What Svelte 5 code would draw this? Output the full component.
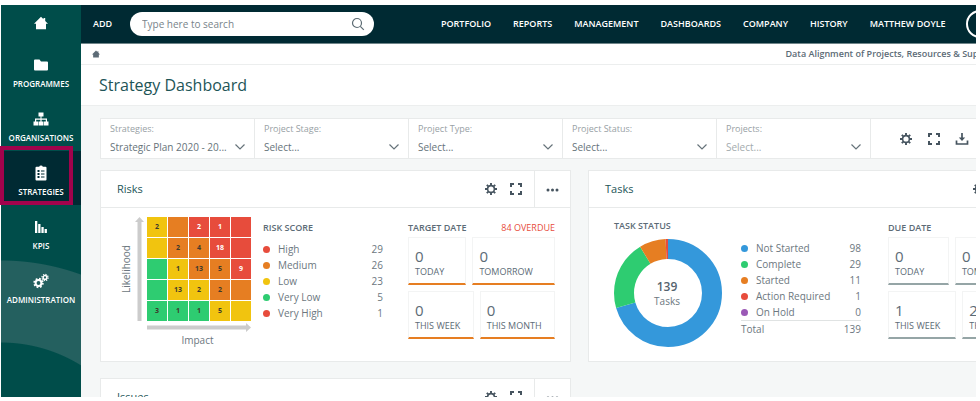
<script>
  let search = "";

  const navLinks = [
    "PORTFOLIO",
    "REPORTS",
    "MANAGEMENT",
    "DASHBOARDS",
    "COMPANY",
    "HISTORY",
    "MATTHEW DOYLE",
  ];

  const sideLinks = [
    { name: "PROGRAMMES", icon: "folder" },
    { name: "ORGANISATIONS", icon: "tree" },
    { name: "STRATEGIES", icon: "clipboard", active: true },
    { name: "KPIS", icon: "bars" },
    { name: "ADMINISTRATION", icon: "cogs" },
  ];

  const filters = [
    { id: "strategies", label: "Strategies:", value: "Strategic Plan 2020 - 20..." },
    { id: "stage", label: "Project Stage:", value: "Select..." },
    { id: "type", label: "Project Type:", value: "Select..." },
    { id: "status", label: "Project Status:", value: "Select..." },
    { id: "projects", label: "Projects:", value: "Select...", empty: true },
  ];

  // y = yellow, o = orange, r = red, g = green
  const matrix = [
    [["y", 2], ["o", ""], ["r", 2], ["r", 1], ["r", ""]],
    [["y", ""], ["o", 2], ["o", 4], ["r", 18], ["r", ""]],
    [["g", ""], ["y", 1], ["o", 13], ["o", 5], ["r", 9]],
    [["g", ""], ["y", 13], ["y", 2], ["o", 2], ["o", ""]],
    [["g", 3], ["g", 1], ["g", 1], ["y", 5], ["y", ""]],
  ];

  const risks = [
    { name: "High", count: 29, color: "#e74c3c" },
    { name: "Medium", count: 26, color: "#e67e22" },
    { name: "Low", count: 23, color: "#f1c40f" },
    { name: "Very Low", count: 5, color: "#2ecc71" },
    { name: "Very High", count: 1, color: "#e74c3c" },
  ];

  const tasks = [
    { name: "Not Started", count: 98, color: "#3498db" },
    { name: "Complete", count: 29, color: "#2ecc71" },
    { name: "Started", count: 11, color: "#e67e22" },
    { name: "Action Required", count: 1, color: "#e74c3c" },
    { name: "On Hold", count: 0, color: "#9b59b6" },
  ];

  const total = tasks.reduce((sum, t) => sum + t.count, 0);

  // each slice starts where the ones before it end
  const slices = tasks.map((t, i) => ({
    color: t.color,
    size: t.count,
    start: tasks.slice(0, i).reduce((sum, s) => sum + s.count, 0),
  }));

  const riskDates = [
    [{ n: 0, label: "TODAY" }, { n: 0, label: "TOMORROW" }],
    [{ n: 0, label: "THIS WEEK" }, { n: 0, label: "THIS MONTH" }],
  ];
  const taskDates = [
    [{ n: 0, label: "TODAY" }, { n: 0, label: "TOMORROW" }],
    [{ n: 1, label: "THIS WEEK" }, { n: 2, label: "THIS MONTH" }],
  ];
</script>

{#snippet home(size)}
  <svg width={size} height={size} viewBox="0 0 14 14" fill="currentColor" aria-hidden="true">
    <path d="M7 .8L0 7.700h2V13.200h10V7.700h2L11.200 5V2H9.500v1.300z" />
  </svg>
{/snippet}

{#snippet gear()}
  <svg width="14" height="14" viewBox="0 0 14 14" fill="none" stroke="currentColor" aria-hidden="true">
    <circle cx="7" cy="7" r="3.400" stroke-width="1.600" />
    <path
      stroke-width="1.900"
      d="M7 1v2.500M7 10.500V13M1 7h2.500M10.500 7H13M2.800 2.800l1.600 1.600M9.600 9.600l1.600 1.600M2.800 11.200l1.600-1.600M9.600 4.400l1.600-1.600"
    />
  </svg>
{/snippet}

{#snippet expand()}
  <svg width="14" height="14" viewBox="0 0 14 14" fill="none" stroke="currentColor" stroke-width="2" aria-hidden="true">
    <path d="M2 5V2h3M9 2h3v3M12 9v3H9M5 12H2V9" />
  </svg>
{/snippet}

{#snippet cardHead(title)}
  <header class="card-head">
    <h2>{title}</h2>
    <button class="tool" aria-label="{title} settings">{@render gear()}</button>
    <button class="tool" aria-label="Expand {title}">{@render expand()}</button>
    <button class="tool more" aria-label="More for {title}">
      <svg width="14" height="14" viewBox="0 0 14 14" fill="currentColor" aria-hidden="true">
        <circle cx="2" cy="8" r="1.500" /><circle cx="6.500" cy="8" r="1.500" /><circle cx="11" cy="8" r="1.500" />
      </svg>
    </button>
  </header>
{/snippet}

{#snippet legend(rows)}
  {#each rows as row}
    <tr>
      <th scope="row"><span class="dot" style="background: {row.color}"></span>{row.name}</th>
      <td>{row.count}</td>
    </tr>
  {/each}
{/snippet}

{#snippet tiles(rows)}
  {#each rows as row}
    <div class="tile-row">
      {#each row as tile}
        <div class="tile">
          <strong>{tile.n}</strong>
          <span>{tile.label}</span>
        </div>
      {/each}
    </div>
  {/each}
{/snippet}

<div class="page">
  <aside class="sidebar">
    <a class="side-home" href="#home" aria-label="Home">{@render home(14)}</a>
    {#each sideLinks as link}
      <a class="side-link" class:active={link.active} href="#{link.icon}">
        <svg width="16" height="16" viewBox="0 0 16 16" fill="currentColor" aria-hidden="true">
          {#if link.icon === "folder"}
            <path d="M1 3.500Q1 2.500 2 2.500h4.500l1.500 2h6q1 0 1 1V12.500q0 1-1 1H2q-1 0-1-1z" />
          {:else if link.icon === "tree"}
            <path d="M5.500 1.500h5v4h-2V7.500h5.500v3h1.500v4H11v-4h1.800V8.700H8.600v1.800h1.900v4h-5v-4h1.900V8.700H3.200v1.800H5v4H.5v-4H2v-3h5.500V5.500h-2z" />
          {:else if link.icon === "clipboard"}
            <path fill-rule="evenodd" d="M3.500 1.800h2.700Q6.500.5 8 .5t1.800 1.300h2.700q1 0 1 1v11.700q0 1-1 1h-9q-1 0-1-1V2.800q0-1 1-1zM4.500 5v2h2V5zM8 5.500v1h3.500v-1zM4.500 8v2h2V8zM8 8.500v1h3.500v-1zM4.500 11v2h2v-2zM8 11.500v1h3.500v-1z" />
          {:else if link.icon === "bars"}
            <path d="M2 2h2.300v12H2zM5.200 5h2.300v9H5.200zM8.400 8h2.300v6H8.400zM11.600 10h2.300v4h-2.300z" />
          {:else}
            <g fill="none" stroke="currentColor">
              <circle cx="5.500" cy="10" r="2.900" stroke-width="2" />
              <circle cx="5.500" cy="10" r="4.400" stroke-width="1.600" stroke-dasharray="1.730 1.730" />
              <circle cx="12" cy="4.500" r="1.900" stroke-width="1.500" />
              <circle cx="12" cy="4.500" r="3.100" stroke-width="1.200" stroke-dasharray="1.220 1.220" />
            </g>
          {/if}
        </svg>
        <span>{link.name}</span>
      </a>
    {/each}
  </aside>

  <div class="main">
    <header class="topbar">
      <button class="add">ADD</button>
      <form class="search" on:submit|preventDefault>
        <input type="text" aria-label="Search" placeholder="Type here to search" bind:value={search} />
        <button aria-label="Search">
          <svg width="14" height="14" viewBox="0 0 14 14" fill="none" stroke="currentColor" stroke-width="1.200" aria-hidden="true">
            <circle cx="6" cy="6" r="4.500" /><path d="M9.300 9.300l3.500 3.500" />
          </svg>
        </button>
      </form>
      <nav>
        {#each navLinks as link}
          <a href="#{link}">{link}</a>
        {/each}
      </nav>
      <button class="avatar" aria-label="Profile"></button>
    </header>

    <div class="crumbs">
      <a href="#home" aria-label="Home">{@render home(8)}</a>
      <span>Data Alignment of Projects, Resources &amp; Support</span>
    </div>

    <div class="title">
      <h1>Strategy Dashboard</h1>
    </div>

    <div class="content">
      <div class="filters">
        {#each filters as f}
          <div class="filter" class:empty={f.empty}>
            <label for={f.id}>{f.label}</label>
            <div class="picker">
              <select id={f.id}>
                <option>{f.value}</option>
              </select>
              <svg width="10" height="6" viewBox="0 0 10 6" fill="none" stroke="currentColor" stroke-width="1.200" aria-hidden="true">
                <path d="M.5.5L5 5 9.500.5" />
              </svg>
            </div>
          </div>
        {/each}
        <div class="filter-tools">
          <button class="tool" aria-label="Settings">{@render gear()}</button>
          <button class="tool" aria-label="Expand">{@render expand()}</button>
          <button class="tool" aria-label="Download">
            <svg width="14" height="14" viewBox="0 0 14 14" fill="none" stroke="currentColor" stroke-width="1.700" aria-hidden="true">
              <path d="M1.500 8.500V12h11V8.500M7 1v5" /><path fill="currentColor" stroke="none" d="M3.800 5.500h6.400L7 9z" />
            </svg>
          </button>
        </div>
      </div>

      <div class="cards">
        <section class="card">
          {@render cardHead("Risks")}
          <div class="card-body">
            <div class="chart">
              <span class="likelihood">Likelihood</span>
              <svg width="9" height="104" viewBox="0 0 9 104" fill="#ccc" aria-hidden="true">
                <path d="M4.500 0L9 5H6.500v99h-4V5H0z" />
              </svg>
              <table class="matrix" aria-label="Risk matrix">
                <tbody>
                  {#each matrix as row}
                    <tr>
                      {#each row as cell}
                        <td class={cell[0]}>{cell[1]}</td>
                      {/each}
                    </tr>
                  {/each}
                </tbody>
              </table>
              <div class="impact">
                <svg width="104" height="9" viewBox="0 0 104 9" fill="#ccc" aria-hidden="true">
                  <path d="M0 2.500h99V0l5 4.500L99 9V6.500H0z" />
                </svg>
                <span>Impact</span>
              </div>
            </div>
            <div class="scores">
              <h3>RISK SCORE</h3>
              <table class="legend">
                <tbody>{@render legend(risks)}</tbody>
              </table>
            </div>
            <div class="dates">
              <div class="dates-head">
                <h3>TARGET DATE</h3>
                <span class="overdue">84 OVERDUE</span>
              </div>
              {@render tiles(riskDates)}
            </div>
          </div>
        </section>

        <section class="card">
          {@render cardHead("Tasks")}
          <div class="card-body tasks">
            <div class="status">
              <h3>TASK STATUS</h3>
              <svg width="108" height="108" viewBox="0 0 108 108" aria-label="Task status">
                <g fill="none" stroke-width="20" transform="rotate(-90 54 54)">
                  {#each slices as s}
                    {#if s.size}
                      <circle
                        cx="54"
                        cy="54"
                        r="44"
                        stroke={s.color}
                        pathLength={total}
                        stroke-dasharray="{s.size} {total - s.size}"
                        stroke-dashoffset={-s.start}
                      />
                    {/if}
                  {/each}
                </g>
                <text class="donut-total" x="53" y="52">{total}</text>
                <text class="donut-label" x="53" y="66">Tasks</text>
              </svg>
            </div>
            <div class="scores">
              <table class="legend">
                <tbody>{@render legend(tasks)}</tbody>
                <tfoot>
                  <tr><th scope="row">Total</th><td>{total}</td></tr>
                </tfoot>
              </table>
            </div>
            <div class="dates">
              <div class="dates-head">
                <h3>DUE DATE</h3>
              </div>
              {@render tiles(taskDates)}
            </div>
          </div>
        </section>

        <section class="card">
          {@render cardHead("Issues")}
          <div class="card-body"></div>
        </section>
      </div>
    </div>
  </div>
</div>

<style>
  :global(body) {
    background: #fff;
  }
  .page {
    display: flex;
    box-sizing: border-box;
    height: 100vh;
    padding: 5px 4px 4px 1px;
    overflow: hidden;
    font-family: "Open Sans", "Noto Sans", sans-serif;
    font-size: 10px;
    line-height: 16px;
    color: #6c7780;
  }
  button,
  input,
  select {
    font: inherit;
    color: inherit;
    border: 0;
    padding: 0;
    margin: 0;
    background: none;
  }
  a {
    color: inherit;
    text-decoration: none;
  }
  svg {
    display: block;
    flex-shrink: 0;
  }
  h1,
  h2,
  h3 {
    margin: 0;
    font-weight: 400;
  }

  .sidebar {
    display: flex;
    flex-direction: column;
    flex: 0 0 80px;
    color: #fff;
    background: radial-gradient(circle at 0 489px, #004d4a 151px, #24605f 152px, #24605f 233px, #004d4a 234px);
  }
  .side-home {
    display: flex;
    align-items: center;
    justify-content: center;
    height: 36px;
    padding-bottom: 2px;
  }
  .side-link {
    position: relative;
    display: flex;
    flex-direction: column;
    align-items: center;
    gap: 3px;
    box-sizing: border-box;
    height: 54px;
    padding-top: 14px;
    font-size: 8px;
    font-weight: 600;
  }
  .side-link.active {
    background: #002a33;
  }
  .side-link.active::after {
    content: "";
    position: absolute;
    left: -1px;
    top: -5px;
    box-sizing: border-box;
    width: 73px;
    height: 59px;
    border: 4px solid #a1034c;
  }

  .main {
    flex: 1;
    min-width: 0;
    overflow: hidden;
    background: #f5f7f7;
  }
  .topbar {
    display: flex;
    align-items: center;
    height: 38px;
    padding-left: 12px;
    background: #002a33;
    border-bottom: 1px solid #6f8589;
    color: #fff;
    font-weight: 600;
    font-size: 9px;
  }
  .add {
    flex: 0 0 37px;
    text-align: left;
  }
  .search {
    display: flex;
    align-items: center;
    box-sizing: border-box;
    flex: 0 0 244px;
    height: 24px;
    padding: 0 9px 0 12px;
    border-radius: 12px;
    background: #fff;
    color: #5c6b73;
    font-weight: 400;
    font-size: 10px;
  }
  .search input {
    flex: 1;
    min-width: 0;
    outline: none;
  }
  .search input::placeholder {
    color: #78838a;
    opacity: 1;
  }
  nav {
    display: flex;
    flex-shrink: 0;
    gap: 22px;
    margin-left: 67px;
    white-space: nowrap;
  }
  .avatar {
    flex: 0 0 28px;
    box-sizing: border-box;
    height: 28px;
    margin-left: 20px;
    border: 2px solid #fff;
    border-radius: 50%;
  }

  .crumbs {
    display: flex;
    align-items: center;
    justify-content: space-between;
    min-width: 905px;
    height: 20px;
    padding: 0 50px 0 11px;
    background: #fff;
    border-bottom: 1px solid #eceeee;
    color: #5c6b76;
    font-size: 9px;
    font-weight: 600;
    white-space: nowrap;
  }
  .title {
    display: flex;
    align-items: center;
    height: 40px;
    padding-left: 18px;
    background: #fff;
    border-bottom: 1px solid #eceeee;
  }
  h1 {
    font-size: 16px;
    line-height: 24px;
    color: #1d5557;
  }

  .content {
    min-width: 959px;
    padding: 12px 18px 12px 19px;
  }
  .filters {
    display: grid;
    grid-template-columns: repeat(5, minmax(153px, 1fr)) minmax(187px, 1fr);
    border: 1px solid #e8eaea;
    background: #fff;
  }
  .filter {
    display: flex;
    flex-direction: column;
    gap: 2px;
    height: 39px;
    box-sizing: border-box;
    padding: 2px 9px 0;
    border-right: 1px solid #e8eaea;
  }
  .filter label {
    font-size: 9px;
    color: #98a1a5;
  }
  .picker {
    display: flex;
    align-items: center;
    color: #66737a;
  }
  .picker select {
    appearance: none;
    flex: 1;
    min-width: 0;
    height: 16px;
  }
  .empty select {
    color: #a3abae;
  }
  .filter-tools {
    display: flex;
    align-items: center;
    gap: 14px;
    padding-left: 28px;
  }
  .tool {
    display: flex;
    align-items: center;
    justify-content: center;
    color: #46545f;
  }

  .cards {
    display: grid;
    grid-template-columns: repeat(2, minmax(471px, 1fr));
    gap: 16px 17px;
    margin-top: 11px;
  }
  .card {
    box-sizing: border-box;
    border: 1px solid #e8eaea;
    background: #fff;
  }
  .card-head {
    display: flex;
    align-items: center;
    gap: 11px;
    height: 36px;
    padding-left: 16px;
    border-bottom: 1px solid #e8eaea;
  }
  h2 {
    flex: 1;
    font-size: 11px;
    color: #1d5557;
  }
  .more {
    width: 36px;
    height: 36px;
    border-left: 1px solid #e8eaea;
  }
  .card-body {
    display: flex;
    height: 153px;
    padding: 0 16px 0 19px;
    box-sizing: border-box;
  }
  h3 {
    font-size: 9px;
    font-weight: 600;
    color: #5c6b76;
  }

  .chart {
    display: grid;
    grid-template-columns: 12px 9px 105px;
    column-gap: 3px;
    grid-template-rows: 105px 27px;
    padding-top: 9px;
  }
  .likelihood {
    writing-mode: vertical-rl;
    transform: rotate(180deg);
    line-height: 12px;
    text-align: center;
  }
  .matrix {
    border-collapse: separate;
    border-spacing: 0;
    width: 105px;
    height: 105px;
    table-layout: fixed;
    color: #3f3a2c;
    font-size: 7px;
    font-weight: 700;
    line-height: 18px;
    text-align: center;
  }
  .matrix td {
    height: 20px;
    padding: 0;
    border-right: 1px solid #fff;
    border-bottom: 1px solid #fff;
  }
  .y {
    background: #f1c40f;
  }
  .o {
    background: #e67e22;
  }
  .g {
    background: #2ecc71;
  }
  .r {
    background: #e74c3c;
    color: #fff;
  }
  .impact {
    grid-column: 3;
    padding: 1px 4px 0 0;
    text-align: center;
  }

  .scores {
    flex: 0 0 120px;
    padding-top: 12px;
    margin-left: 11px;
  }
  .legend {
    width: 100%;
    border-collapse: collapse;
  }
  h3 + .legend {
    margin-top: 5px;
  }
  .legend th {
    padding: 0;
    height: 16px;
    font-weight: 400;
    text-align: left;
    white-space: nowrap;
  }
  .legend td {
    padding: 0;
    text-align: right;
  }
  .legend tfoot th,
  .legend tfoot td {
    border-top: 1px solid #e0e3e3;
  }
  .dot {
    display: inline-block;
    width: 7px;
    height: 7px;
    margin-right: 8px;
    border-radius: 50%;
  }

  .dates {
    flex: 0 0 147px;
    margin-left: 25px;
    padding-top: 12px;
  }
  .dates-head {
    display: flex;
    justify-content: space-between;
    margin-bottom: 1px;
    font-size: 9px;
  }
  .overdue {
    color: #e74c3c;
    font-weight: 500;
  }
  .tile-row {
    display: flex;
    gap: 6px;
    margin-bottom: 6px;
  }
  .tile {
    flex: 1 1 auto;
    display: flex;
    flex-direction: column;
    box-sizing: border-box;
    height: 48px;
    padding: 10px 6px 0;
    border: 1px solid #f3f4f4;
    border-bottom: 2px solid #e67e22;
    color: #5c6b76;
    white-space: nowrap;
    font-size: 9px;
    font-weight: 500;
  }
  .tile strong {
    font-size: 15px;
    line-height: 16px;
    font-weight: 500;
  }
  .tasks .tile {
    border-bottom-color: #95a5a6;
  }

  .tasks {
    padding-left: 25px;
  }
  .status {
    padding-top: 10px;
  }
  .status svg {
    margin-top: 5px;
  }
  .tasks .scores {
    padding-top: 32px;
    margin-left: 19px;
  }
  .tasks .dates {
    flex-basis: 152px;
    margin-left: 27px;
  }
  .donut-total,
  .donut-label {
    text-anchor: middle;
    fill: #6c7780;
  }
  .donut-total {
    font-size: 12px;
    font-weight: 600;
    fill: #55636e;
  }
</style>
